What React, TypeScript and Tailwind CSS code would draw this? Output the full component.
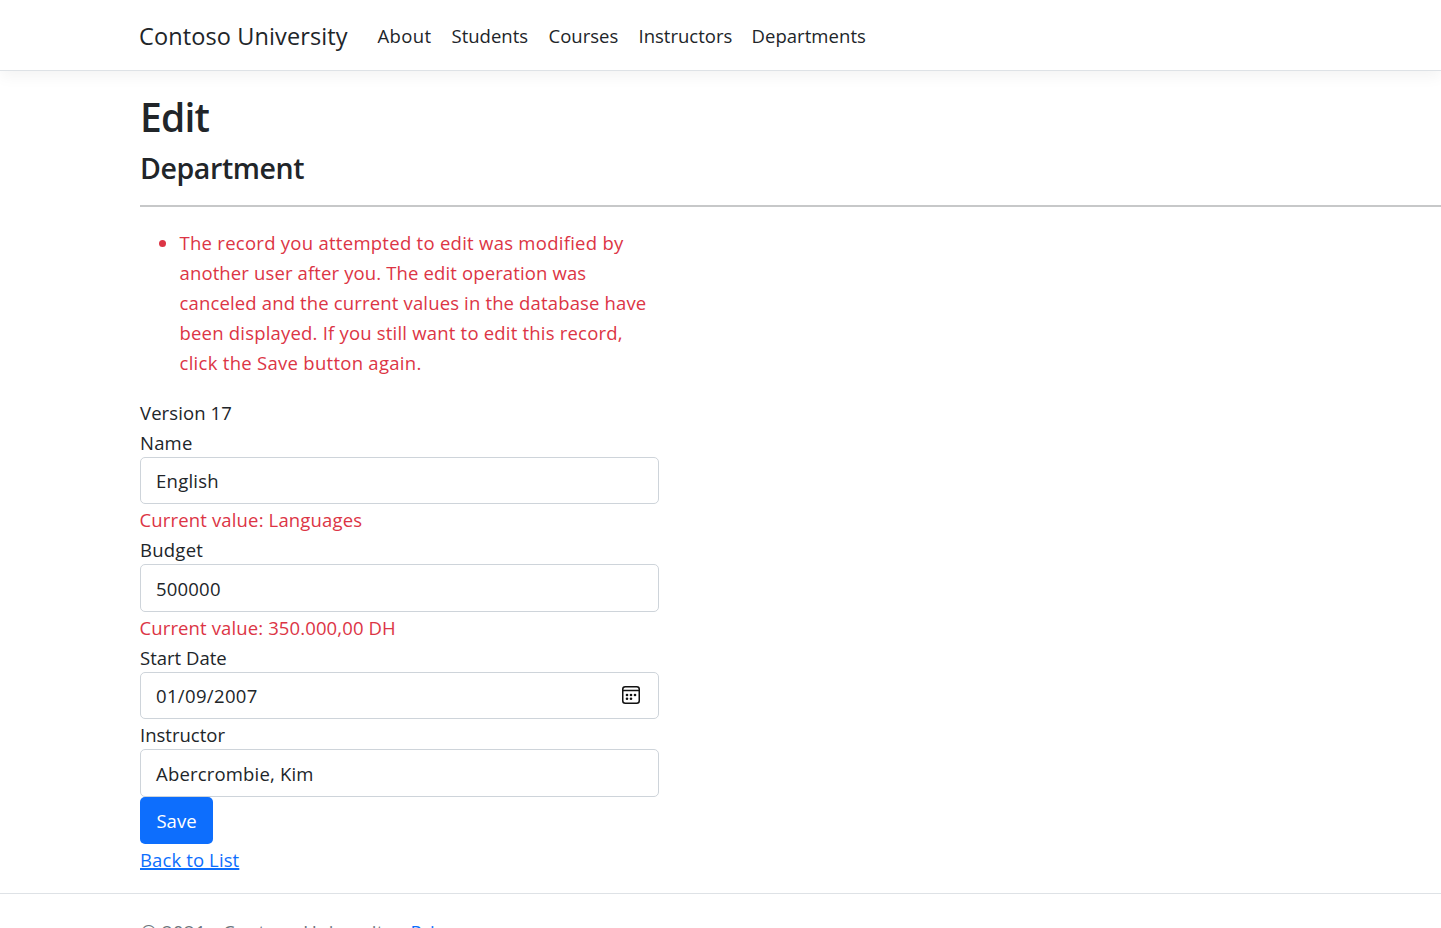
import React from 'react';

const navItems = [
  { label: 'About', style: 'w-[74px] tracking-[0.4px]' },
  { label: 'Students', style: 'w-[97px]' },
  { label: 'Courses', style: 'w-[90px]' },
  { label: 'Instructors', style: 'w-[113px]' },
  { label: 'Departments', style: 'w-[116px] tracking-[0.05px]' },
];

const messageLines = [
  { text: 'The record you attempted to edit was modified by', style: 'tracking-[0.27px]' },
  { text: 'another user after you. The edit operation was', style: 'tracking-[0.13px]' },
  { text: 'canceled and the current values in the database have', style: 'tracking-[0.15px]' },
  { text: 'been displayed. If you still want to edit this record,', style: 'tracking-[0.2px]' },
  { text: 'click the Save button again.', style: 'tracking-[0.28px]' },
];

function CalendarIcon() {
  return (
    <svg className="mb-[2px]" width="18" height="18" viewBox="0 0 18 18" fill="none" stroke="#111" strokeWidth="1.5">
      <rect x="0.75" y="0.75" width="16.5" height="16.5" rx="2.5" />
      <path d="M1 4.5h16" />
      <g fill="#111" stroke="none">
        <circle cx="5" cy="9" r="1.3" />
        <circle cx="9" cy="9" r="1.3" />
        <circle cx="13" cy="9" r="1.3" />
        <circle cx="5" cy="12.8" r="1.3" />
        <circle cx="9" cy="12.8" r="1.3" />
      </g>
    </svg>
  );
}

function Field({ value, style, children }: { value: string; style: string; children?: React.ReactNode }) {
  return (
    <div className={`flex w-[519px] items-center justify-between rounded-[5px] border border-[#ced4da] bg-white pr-[18px] pl-[15px] ${style}`}>
      <span>{value}</span>
      {children}
    </div>
  );
}

export default function App() {
  return (
    <div className="h-[928px] overflow-hidden bg-white font-['Open_Sans',sans-serif] text-[18.5px] leading-[30px] font-normal whitespace-nowrap text-[#212529]">
      <header className="flex h-[71px] items-center border-b border-[#dee2e6] pt-[2px] pl-[139px] shadow-[0_5px_15px_rgba(0,0,0,0.05)]">
        <a className="w-[238.5px] text-[23.5px] tracking-[0.12px]">Contoso University</a>
        <nav className="flex">
          {navItems.map((item) => (
            <a key={item.label} className={item.style}>{item.label}</a>
          ))}
        </nav>
      </header>
      <main className="pl-[140px]">
        <h1 className="pt-[22px] text-[39px] leading-[48px] font-semibold tracking-[-0.8px]">Edit</h1>
        <h2 className="mt-[9px] text-[28.5px] leading-[36px] font-semibold tracking-[-0.4px]">Department</h2>
        <hr className="mt-[19px] h-[2px] border-0 bg-[#c7c8c9]" />
        <ul className="mt-[21px] list-disc pl-[39px] text-[#dc3545]">
          <li>
            {messageLines.map((line) => (
              <span key={line.text} className={`block pl-[0.5px] ${line.style}`}>{line.text}</span>
            ))}
          </li>
        </ul>
        <form className="mt-[20px] flex flex-col items-start">
          <span className="h-[30px] tracking-[0.1px]">Version 17</span>
          <label className="h-[29px] tracking-[0.2px]">Name</label>
          <Field value="English" style="h-[47px] tracking-[0.25px]" />
          <span className="-ml-[0.5px] mt-px h-[30px] tracking-[0.15px] text-[#dc3545]">Current value: Languages</span>
          <label className="h-[29px] tracking-[0.25px]">Budget</label>
          <Field value="500000" style="h-[48px] pt-[2px] tracking-[0.2px]" />
          <span className="-ml-[0.5px] mt-px h-[30px] tracking-[0.12px] text-[#dc3545]">Current value: 350.000,00 DH</span>
          <label className="h-[29px]">Start Date</label>
          <Field value="01/09/2007" style="h-[47px] tracking-[0.35px]"><CalendarIcon /></Field>
          <label className="mt-px h-[29px]">Instructor</label>
          <Field value="Abercrombie, Kim" style="h-[48px] pt-[2px] tracking-[0.18px]" />
          <button type="button" className="h-[47px] w-[73px] rounded-[5px] bg-[#0d6efd] text-white">Save</button>
          <a className="mt-px h-[30px] tracking-[0.12px] text-[#0d6efd] underline decoration-2 underline-offset-1">Back to List</a>
        </form>
      </main>
      <footer className="mt-[18px] border-t border-[#dee2e6] pt-[23px] pl-[141px] tracking-[0.44px] text-[#6c757d]">
        © 2021 - Contoso University - <a className="text-[#0d6efd]">Privacy</a>
      </footer>
    </div>
  );
}
